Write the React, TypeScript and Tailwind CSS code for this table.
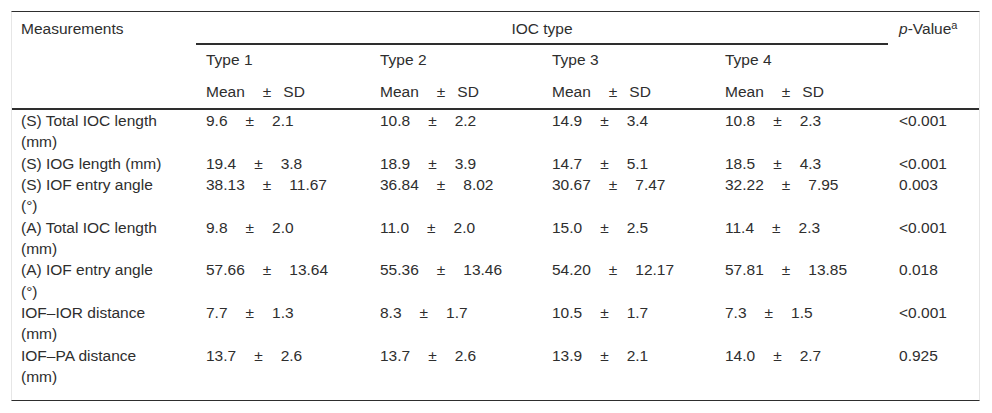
import React from "react";

type Row = {
  label: string;
  values: [string, string][];
  p: string;
};

const rows: Row[] = [
  {
    label: "(S) Total IOC length (mm)",
    values: [["9.6", "2.1"], ["10.8", "2.2"], ["14.9", "3.4"], ["10.8", "2.3"]],
    p: "<0.001",
  },
  {
    label: "(S) IOG length (mm)",
    values: [["19.4", "3.8"], ["18.9", "3.9"], ["14.7", "5.1"], ["18.5", "4.3"]],
    p: "<0.001",
  },
  {
    label: "(S) IOF entry angle (°)",
    values: [["38.13", "11.67"], ["36.84", "8.02"], ["30.67", "7.47"], ["32.22", "7.95"]],
    p: "0.003",
  },
  {
    label: "(A) Total IOC length (mm)",
    values: [["9.8", "2.0"], ["11.0", "2.0"], ["15.0", "2.5"], ["11.4", "2.3"]],
    p: "<0.001",
  },
  {
    label: "(A) IOF entry angle (°)",
    values: [["57.66", "13.64"], ["55.36", "13.46"], ["54.20", "12.17"], ["57.81", "13.85"]],
    p: "0.018",
  },
  {
    label: "IOF–IOR distance (mm)",
    values: [["7.7", "1.3"], ["8.3", "1.7"], ["10.5", "1.7"], ["7.3", "1.5"]],
    p: "<0.001",
  },
  {
    label: "IOF–PA distance (mm)",
    values: [["13.7", "2.6"], ["13.7", "2.6"], ["13.9", "2.1"], ["14.0", "2.7"]],
    p: "0.925",
  },
];

// header variant sits a bit tighter after the ± than the data cells
const MeanSd = ({ mean, sd, head }: { mean: string; sd: string; head?: boolean }) => (
  <span className="whitespace-nowrap">
    {mean}
    <span className="ml-[18px]">±</span>
    <span className={head ? "ml-[12px]" : "ml-[18px]"}>{sd}</span>
  </span>
);

const App = () => {
  return (
    <div className="min-h-screen bg-white pt-[11px] pl-[11px] font-['Liberation_Sans',Arial,sans-serif] text-[15.5px] leading-[21.33px] text-[#2e2e2e]">
      <div className="w-[969px] border-t border-b border-x border-t-[#2e2e2e] border-b-[#2e2e2e] border-x-[#e6e6e6]">
        <table className="w-full table-fixed">
          <colgroup>
            <col className="w-[184px]" />
            <col className="w-[174px]" />
            <col className="w-[172px]" />
            <col className="w-[173px]" />
            <col className="w-[175px]" />
            <col className="w-[89px]" />
          </colgroup>
          <thead className="border-b-2 border-[#2e2e2e]">
            <tr>
              <th rowSpan={3} className="pl-[9px] pt-[6px] text-left align-top font-normal">
                Measurements
              </th>
              <th colSpan={4} className="pt-[6px] align-top font-normal">
                <div className="mr-[2px] border-b-2 border-[#2e2e2e] pb-[4px] text-center">IOC type</div>
              </th>
              <th rowSpan={3} className="pl-[9px] pt-[6px] text-left align-top font-normal whitespace-nowrap">
                <i>p</i>-Value<sup className="text-[11px]">a</sup>
              </th>
            </tr>
            <tr>
              {["Type 1", "Type 2", "Type 3", "Type 4"].map((t) => (
                <th key={t} className="pl-[10px] pt-[4px] pb-[5px] text-left align-top font-normal">
                  {t}
                </th>
              ))}
            </tr>
            <tr>
              {[1, 2, 3, 4].map((i) => (
                <th key={i} className="pl-[10px] pt-[5px] pb-[6px] text-left align-top font-normal">
                  <MeanSd mean="Mean" sd="SD" head />
                </th>
              ))}
            </tr>
          </thead>
          <tbody>
            {rows.map((row, idx) => {
              const pad = idx === rows.length - 1 ? "pb-[13px]" : "";
              return (
                <tr key={row.label}>
                  <td className={`pl-[9px] pr-[30px] align-top ${pad}`}>{row.label}</td>
                  {row.values.map(([m, s], i) => (
                    <td key={i} className={`pl-[10px] align-top ${pad}`}>
                      <MeanSd mean={m} sd={s} />
                    </td>
                  ))}
                  <td className={`pl-[9px] align-top ${pad}`}>{row.p}</td>
                </tr>
              );
            })}
          </tbody>
        </table>
      </div>
    </div>
  );
};

export default App;
